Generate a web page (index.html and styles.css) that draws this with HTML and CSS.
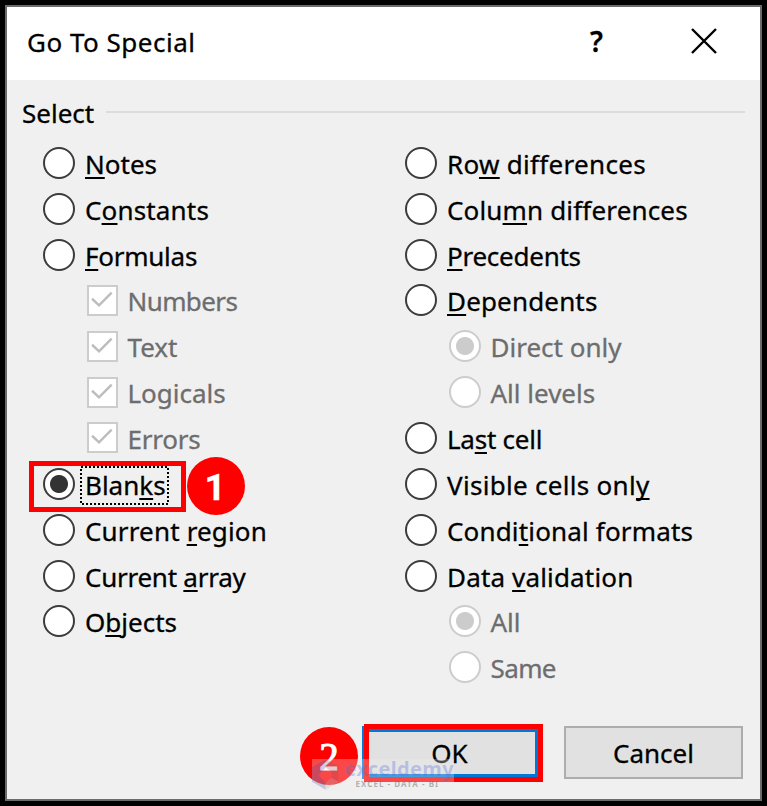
FILE: index.html
```html
<!DOCTYPE html>
<html lang="en">
<head>
    <meta charset="UTF-8">
    <meta name="viewport" content="width=device-width, initial-scale=1.0">
    <title>Go To Special</title>
    <link rel="stylesheet" href="styles.css">
</head>
<body>
    <div class="dialog">
        <div class="titlebar">
            <span class="title">Go To Special</span>
            <span class="help">?</span>
            <svg class="close" width="26" height="26" viewBox="0 0 26 26"><path d="M1 1L25 25M25 1L1 25" stroke="#000" stroke-width="2.4" fill="none"/></svg>
        </div>
        <div class="content">
            <div class="legend"><span>Select</span><hr></div>
            <div class="options">
                <div class="column">
                    <div class="row"><i class="radio"></i><span><u>N</u>otes</span></div>
                    <div class="row"><i class="radio"></i><span class="loose">C<u>o</u>nstants</span></div>
                    <div class="row"><i class="radio"></i><span class="tight"><u>F</u>ormulas</span></div>
                    <div class="row sub"><svg class="check" viewBox="0 0 31 31"><path d="M3.5 13.5L11.5 21L26 6.5"/></svg><span class="tighter">Numbers</span></div>
                    <div class="row sub"><svg class="check" viewBox="0 0 31 31"><path d="M3.5 13.5L11.5 21L26 6.5"/></svg><span>Text</span></div>
                    <div class="row sub"><svg class="check" viewBox="0 0 31 31"><path d="M3.5 13.5L11.5 21L26 6.5"/></svg><span>Logicals</span></div>
                    <div class="row sub"><svg class="check" viewBox="0 0 31 31"><path d="M3.5 13.5L11.5 21L26 6.5"/></svg><span class="tight">Errors</span></div>
                    <div class="row">
                        <i class="radio on"></i><span class="blanks">Blan<u>k</u>s</span>
                        <svg class="focus" width="90" height="40"><rect x="1" y="1" width="87" height="37"/></svg>
                        <div class="mark mark-blanks"></div>
                        <div class="badge badge-one">1</div>
                    </div>
                    <div class="row"><i class="radio"></i><span class="loose">Current <u>r</u>egion</span></div>
                    <div class="row"><i class="radio"></i><span class="tight">Current <u>a</u>rray</span></div>
                    <div class="row"><i class="radio"></i><span>O<u>b</u>jects</span></div>
                </div>
                <div class="column">
                    <div class="row"><i class="radio"></i><span class="looser">Ro<u>w</u> differences</span></div>
                    <div class="row"><i class="radio"></i><span class="loose">Colu<u>m</u>n differences</span></div>
                    <div class="row"><i class="radio"></i><span class="tight"><u>P</u>recedents</span></div>
                    <div class="row"><i class="radio"></i><span class="loose"><u>D</u>ependents</span></div>
                    <div class="row sub"><i class="radio on"></i><span>Direct only</span></div>
                    <div class="row sub"><i class="radio"></i><span>All levels</span></div>
                    <div class="row"><i class="radio"></i><span class="tight">La<u>s</u>t cell</span></div>
                    <div class="row"><i class="radio"></i><span class="looser">Visible cells onl<u>y</u></span></div>
                    <div class="row"><i class="radio"></i><span class="loose">Condi<u>t</u>ional formats</span></div>
                    <div class="row"><i class="radio"></i><span class="loose">Data <u>v</u>alidation</span></div>
                    <div class="row sub"><i class="radio on"></i><span>All</span></div>
                    <div class="row sub"><i class="radio"></i><span class="tighter">Same</span></div>
                </div>
            </div>
            <div class="buttons">
                <div class="btn ok"><span>OK</span>
                    <div class="mark mark-ok"></div>
                    <div class="badge badge-two"><span>2</span></div>
                    <div class="watermark">
                        <svg width="28" height="32" viewBox="0 0 28 32">
                            <path d="M0 8L14 0L14 8L7 16L14 24L14 31L0 23Z" fill="#3c50a0"/>
                            <path d="M14 0L27 7V23L20 19V13L14 8Z" fill="#9a4a60"/>
                            <path d="M14 31L27 23L20 19L14 24Z" fill="#b0b0b8"/>
                        </svg>
                        <div class="wm-text"><b>exceldemy</b><small>EXCEL - DATA - BI</small></div>
                    </div>
                </div>
                <div class="btn">Cancel</div>
            </div>
        </div>
    </div>
</body>
</html>
```

FILE: styles.css
```css
* {
    box-sizing: border-box;
}
body {
    margin: 0;
    height: 806px;
    padding: 5px 5px 4px;
    background: #000;
    font-family: "Noto Sans", "Open Sans", sans-serif;
    font-size: 26px;
    color: #000;
    -webkit-text-stroke: 0.3px;
    overflow: hidden;
}
.dialog {
    width: 757px;
    height: 796px;
    border: 2px solid #6b6b6b;
    background: #f0f0f0;
}
.titlebar {
    display: flex;
    align-items: center;
    height: 73px;
    padding: 0 43px 5px 20px;
    background: #fff;
}
.title {
    flex: 1;
    padding-top: 2px;
    letter-spacing: 0.5px;
}
.help {
    font-weight: 600;
    font-size: 28px;
    margin-right: 88px;
}
.content {
    padding: 11px 15px 0;
}
.legend {
    display: flex;
    align-items: center;
    gap: 12px;
    height: 46px;
}
.legend span {
    padding-bottom: 2px;
}
.legend hr {
    flex: 1;
    height: 2px;
    margin: 0 0 4px;
    border: 0;
    background: #dcdcdc;
}
.options {
    display: grid;
    grid-template-columns: 362px 1fr;
    height: 552px;
    margin-top: 3px;
    padding-left: 21px;
}
.row {
    display: flex;
    align-items: center;
    gap: 10px;
    position: relative;
    height: 45.85px;
    white-space: nowrap;
}
.row span {
    padding-top: 2px;
}
.sub {
    padding-left: 43.5px;
    color: #6d6d6d;
}
.tighter {
    letter-spacing: -0.6px;
}
.tight {
    letter-spacing: -0.25px;
}
.loose {
    letter-spacing: 0.16px;
}
.looser {
    letter-spacing: 0.3px;
}
u {
    text-decoration-thickness: 2px;
    text-underline-offset: 3px;
    text-decoration-skip-ink: none;
}
.radio {
    width: 32px;
    height: 32px;
    border: 2px solid #3c3c3c;
    border-radius: 50%;
    background: #fff;
}
.radio.on {
    background: radial-gradient(circle, #333 8.5px, #fff 9.5px);
}
.sub .radio {
    border-color: #ccc;
}
.sub .radio.on {
    background: radial-gradient(circle, #ccc 8.5px, #fff 9.5px);
}
.check {
    width: 31px;
    height: 31px;
    border: 2px solid #ccc;
    background: #fff;
}
.check path {
    fill: none;
    stroke: #bdbdbd;
    stroke-width: 2.8;
}
.focus {
    position: absolute;
    left: 37px;
    top: 5px;
}
.focus rect {
    fill: none;
    stroke: #000;
    stroke-width: 2;
    stroke-dasharray: 2 2;
}
.mark {
    position: absolute;
    border: 5px solid #f00;
}
.mark-blanks {
    left: -14px;
    top: 0;
    width: 157px;
    height: 51px;
}
.badge {
    position: absolute;
    display: flex;
    align-items: center;
    justify-content: center;
    width: 58px;
    height: 58px;
    border-radius: 50%;
    background: #f00;
    color: #fff;
    font-size: 37px;
}
.badge-one {
    left: 144px;
    top: -4px;
    padding: 4px 2px 0 0;
    font-family: Roboto, sans-serif;
    font-weight: bold;
}
.badge-two {
    left: -64px;
    top: -5px;
    font-family: "Liberation Serif", serif;
    font-size: 39px;
    -webkit-text-stroke: 1px;
}
.buttons {
    display: flex;
    justify-content: flex-end;
    gap: 23px;
    margin-top: 34px;
    padding-right: 2px;
}
.btn {
    position: relative;
    display: flex;
    align-items: center;
    justify-content: center;
    width: 179px;
    height: 53px;
    border: 2px solid #adadad;
    background: #e1e1e1;
}
.ok {
    border: solid #0078d7;
    border-width: 6px 6px 5px 2px;
}
.mark-ok {
    left: 0;
    top: -8px;
    width: 179px;
    height: 58px;
}
.watermark {
    position: absolute;
    left: -52px;
    top: 27px;
    display: flex;
    gap: 5px;
    width: 142px;
    height: 32px;
    background: rgba(240, 240, 240, 0.3);
    -webkit-text-stroke: 0;
}
.watermark svg {
    opacity: 0.25;
}
.wm-text {
    display: flex;
    flex-direction: column;
    line-height: 1;
}
.wm-text b {
    height: 21px;
    font-size: 20px;
    letter-spacing: 0.35px;
    color: rgba(80, 110, 220, 0.33);
}
.wm-text small {
    padding-left: 11px;
    font-size: 8px;
    font-weight: bold;
    letter-spacing: 1.05px;
    color: rgba(110, 110, 110, 0.5);
}
```
